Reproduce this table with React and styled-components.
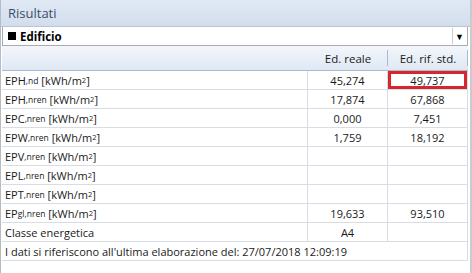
import React from "react";
import styled, { createGlobalStyle } from "styled-components";

const GlobalStyle = createGlobalStyle`
  html, body {
    margin: 0;
    padding: 0;
    background: #ffffff;
  }
  body {
    font-family: "Open Sans", "Noto Sans", Arial, sans-serif;
    font-size: 11px;
    color: #1a1a1a;
  }
`;

const Panel = styled.div`
  width: 472px;
  height: 273px;
  box-sizing: border-box;
  display: flex;
  flex-direction: column;
  background: #ffffff;
  border-left: 1px solid #b4bcc8;
  border-right: 2px solid #c9cbce;
  overflow: hidden;
`;

const TitleBar = styled.div`
  height: 26px;
  flex: none;
  display: flex;
  align-items: center;
  padding-left: 7px;
  background: linear-gradient(#e1e9f5, #d2ddec);
  border-bottom: 1px solid #b8c6d8;
  color: #3a4d68;
  font-size: 13px;
`;

const Body = styled.div`
  flex: 1;
  display: flex;
  flex-direction: column;
  padding: 0 1px 0 1px;
  width: 466px;
`;

const Select = styled.div`
  height: 18px;
  display: flex;
  align-items: center;
  border: 1px solid #a8acb2;
  border-top: none;
  background: #ffffff;
`;

const SelectValue = styled.div`
  flex: 1;
  display: flex;
  align-items: center;
  gap: 4px;
  padding-left: 5px;
  font-weight: 700;
  font-size: 11.5px;
  color: #000;
`;

const Square = styled.span`
  width: 8px;
  height: 8px;
  background: #000;
`;

const ArrowButton = styled.div`
  width: 13px;
  height: 16px;
  margin-right: 1px;
  border-left: 1px solid #c8ccd2;
  display: flex;
  align-items: center;
  justify-content: center;
  font-size: 9px;
  color: #000;
`;

const Grid = styled.div`
  display: grid;
  grid-template-columns: 306px 80px 80px;
`;

const HeadCell = styled.div`
  height: 25px;
  box-sizing: border-box;
  display: flex;
  align-items: center;
  justify-content: center;
  background: linear-gradient(#f3f6fb, #dfe8f4);
  border-bottom: 1px solid #a9bad0;
  position: relative;
  color: #1a1a1a;
  font-size: 11.5px;

  &::after {
    content: "";
    position: absolute;
    right: 0;
    top: 4px;
    bottom: 4px;
    width: 1px;
    background: #a9bad0;
    display: ${(p) => (p.$first ? "none" : "block")};
  }
`;

const Cell = styled.div`
  height: 19px;
  box-sizing: border-box;
  display: flex;
  align-items: center;
  justify-content: ${(p) => (p.$label ? "flex-start" : "center")};
  padding-left: ${(p) => (p.$label ? "3px" : "0")};
  border-bottom: 1px solid #d8dde5;
  border-right: 1px solid #d8dde5;
  box-shadow: ${(p) => (p.$mark ? "inset 0 0 0 3px #d7262e" : "none")};
  grid-column: ${(p) => (p.$wide ? "1 / -1" : "auto")};
  font-size: 11px;
  white-space: nowrap;
`;

const Sub = styled.span`
  font-size: 8.5px;
`;

const Sup = styled.sup`
  font-size: 7.5px;
  line-height: 0;
`;

const rows = [
  { big: "H", small: ",nd", reale: "45,274", std: "49,737", mark: true },
  { big: "H", small: ",nren", reale: "17,874", std: "67,868" },
  { big: "C", small: ",nren", reale: "0,000", std: "7,451" },
  { big: "W", small: ",nren", reale: "1,759", std: "18,192" },
  { big: "V", small: ",nren", reale: "", std: "" },
  { big: "L", small: ",nren", reale: "", std: "" },
  { big: "T", small: ",nren", reale: "", std: "" },
  { big: "", small: "gl,nren", reale: "19,633", std: "93,510" },
];

const App = () => {
  return (
    <Panel>
      <GlobalStyle />
      <TitleBar>Risultati</TitleBar>
      <Body>
        <Select>
          <SelectValue>
            <Square />
            Edificio
          </SelectValue>
          <ArrowButton>▼</ArrowButton>
        </Select>
        <Grid>
          <HeadCell $first />
          <HeadCell>Ed. reale</HeadCell>
          <HeadCell>Ed. rif. std.</HeadCell>
          {rows.map((r, i) => (
            <React.Fragment key={i}>
              <Cell $label>
                EP{r.big}
                <Sub>{r.small}</Sub>&nbsp;[kWh/m<Sup>2</Sup>]
              </Cell>
              <Cell>{r.reale}</Cell>
              <Cell $mark={r.mark}>{r.std}</Cell>
            </React.Fragment>
          ))}
          <Cell $label>Classe energetica</Cell>
          <Cell>A4</Cell>
          <Cell />
          <Cell $label $wide>
            I dati si riferiscono all'ultima elaborazione del: 27/07/2018 12:09:19
          </Cell>
        </Grid>
      </Body>
    </Panel>
  );
};

export default App;
